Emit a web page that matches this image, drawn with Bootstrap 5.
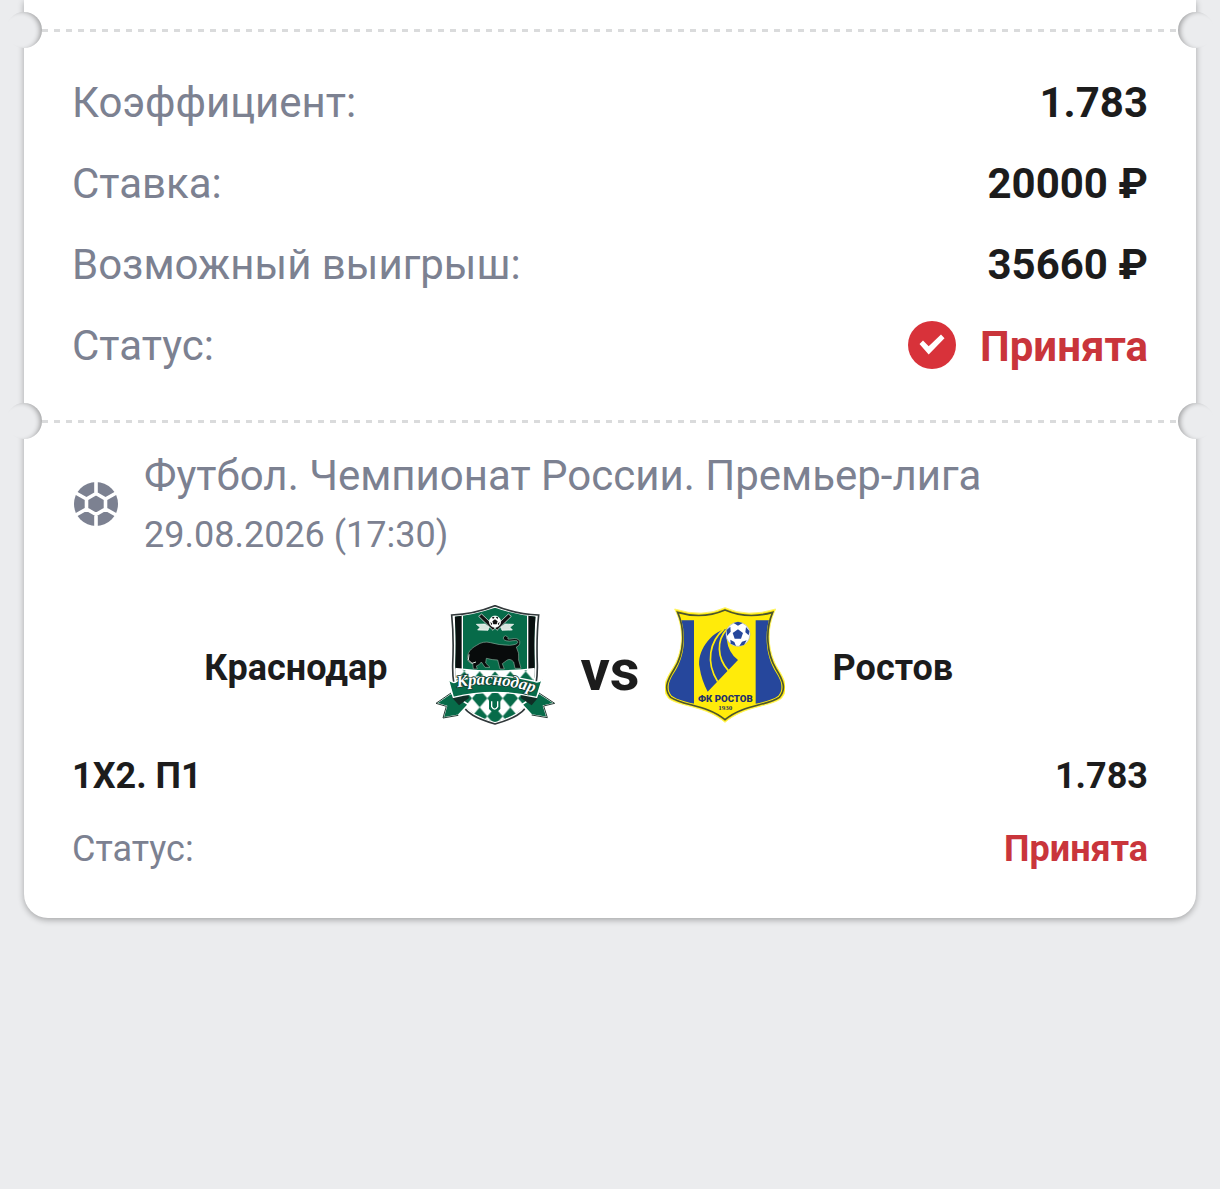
<!DOCTYPE html>
<html lang="ru">
<head>
<meta charset="utf-8">
<meta name="viewport" content="width=device-width, initial-scale=1">
<title>Купон</title>
<link rel="stylesheet" href="https://cdn.jsdelivr.net/npm/bootstrap@5.3.0/dist/css/bootstrap.min.css">
<style>
  body { background: #ebecee; color: #1c1c1c; font-family: Roboto, "Noto Sans", sans-serif; font-size: 42px; line-height: 49px; }
  .ticket { background: #fff; border-radius: 0 0 24px 24px; box-shadow: 0 2px 6px rgba(0,0,0,.3); padding-bottom: 48px; }
  .ticket-stub { height: 29px; }
  .perforation { height: 3px; margin: 0 18px; background: repeating-linear-gradient(90deg, #dadbdc 0 6px, transparent 6px 12px); }
  .tear { position: relative; }
  .notch { position: absolute; top: -17px; width: 36px; height: 36px; border-radius: 50%; background: #ebecee; }
  .notch-left { left: -18px; box-shadow: inset -4px 1px 5px -2px rgba(0,0,0,.32); }
  .notch-right { right: -18px; box-shadow: inset 4px 1px 5px -2px rgba(0,0,0,.32); }
  .totals { padding: 46px 48px 49px; gap: 32px; }
  .status-icon { margin-bottom: 2px; }
  .muted-label { color: #7c8191; font-weight: 400; }
  .accepted { color: #c9353b; }
  .event { padding: 28px 48px 0; }
  .event-date { padding-top: 14px; }
  .text-md { font-size: 36px; line-height: 42px; }
  .versus { font-size: 58px; line-height: 68px; padding-top: 10px; }
  .teams { padding-top: 49px; gap: 25px; }
  .team { gap: 48px; }
  .team-name { padding-top: 6px; }
  .outcome { padding-top: 30px; gap: 31px; }
</style>
</head>
<body class="min-vh-100">
<main class="px-4">
  <article class="ticket">
    <div class="ticket-stub"></div>
    <div class="tear"><div class="perforation"></div><span class="notch notch-left"></span><span class="notch notch-right"></span></div>

    <dl class="totals d-flex flex-column mb-0">
      <div class="d-flex justify-content-between"><dt class="muted-label">Коэффициент:</dt><dd class="fw-bold mb-0">1.783</dd></div>
      <div class="d-flex justify-content-between"><dt class="muted-label">Ставка:</dt><dd class="fw-bold mb-0">20000 ₽</dd></div>
      <div class="d-flex justify-content-between"><dt class="muted-label">Возможный выигрыш:</dt><dd class="fw-bold mb-0">35660 ₽</dd></div>
      <div class="d-flex justify-content-between"><dt class="muted-label">Статус:</dt>
        <dd class="fw-bold mb-0 accepted d-flex align-items-end gap-4">
          <svg class="status-icon" width="48" height="48" viewBox="0 0 48 48" aria-hidden="true"><circle cx="24" cy="24" r="24" fill="#d8323a"/><path d="M11.500 23 15 19.500 20.700 25.200 33 13.500 36.500 17.200 20.700 33.500Z" fill="#fff"/></svg>
          Принята</dd></div>
    </dl>

    <div class="tear"><div class="perforation"></div><span class="notch notch-left"></span><span class="notch notch-right"></span></div>

    <section class="event">
      <header class="event-head d-flex align-items-center gap-4">
        <svg width="48" height="48" viewBox="0 0 48 48" aria-hidden="true"><circle cx="24" cy="24" r="22" fill="#7c8191"/><path d="M24 13.500 33.500 19V29L24 34.500 14.500 29V19ZM24 0V13.500M33.500 19 46 12M33.500 29 46 36M24 34.500V48M14.500 29 2 36M14.500 19 2 12" fill="none" stroke="#fff" stroke-width="3.600"/></svg>
        <div>
          <div class="muted-label">Футбол. Чемпионат России. Премьер-лига</div>
          <div class="muted-label text-md event-date">29.08.2026 (17:30)</div>
        </div>
      </header>

      <div class="teams d-flex align-items-center justify-content-center">
        <div class="team d-flex align-items-center justify-content-end flex-fill w-25">
          <span class="team-name text-md fw-bold">Краснодар</span>
          <svg class="flex-shrink-0" width="120" height="120" viewBox="30 30 360 360" role="img" aria-label="Краснодар">
            <defs>
              <clipPath id="kr"><path d="M89 65Q145 60 210 38Q272 60 332 65Q326 120 329 205Q330 270 315 300C300 350 255 367 210 381C165 367 120 350 105 300Q90 270 91 205Q94 120 89 65Z"/></clipPath>
              <pattern id="dia" width="46" height="54" patternUnits="userSpaceOnUse" x="187" y="283"><path fill="#fff" d="M0 0h46v54H0z"/><path fill="#076b49" d="M23 0 46 27 23 54 0 27Z"/></pattern>
              <path id="ribbonText" d="M102 276Q212 256 322 292"/>
            </defs>
            <path d="M80 60Q145 58 210 32Q275 58 341 60Q334 125 337 210Q338 270 321 304C305 358 255 374 210 387C165 374 115 358 98 304Q82 270 83 210Q87 125 80 60Z" fill="#fff" stroke="#30383a" stroke-width="5"/>
            <g clip-path="url(#kr)">
              <path fill="#076b49" d="M80 30h260v360H80z"/>
              <path fill="#090f0f" d="M83 60h29v190H83zM309 60h29v190h-29z"/>
              <path fill="#fff" d="M110 60h4v190h-4zM306 60h4v190h-4z"/>
              <path fill="#fff" d="M88 218Q210 234 333 218V390H88Z"/>
              <path fill="url(#dia)" d="M88 222Q210 238 333 222V390H88Z"/>
            </g>
            <g stroke="#fff" stroke-width="2" fill="#111">
              <path d="m154 88 25-1 14 9-4 10-31-1 7-8ZM266 88l-25-1-14 9 4 10 31-1-7-8Z" fill="#d7e5dd"/>
              <path d="m161 64 9-7 42 40-8 9ZM259 64l-9-7-42 40 8 9Z"/>
              <circle cx="210" cy="80" r="17" fill="#fff"/>
              <path d="m210 73 8 6-3 9h-10l-3-9ZM201 66h8l-5 7ZM219 66h-7l6 7ZM196 80l6 6-3 5ZM224 80l-6 6 3 5Z" stroke="none"/>
            </g>
            <path d="M127 190C128 170 139 160 155 151Q174 137 197 143Q219 150 254 151Q276 149 278 143Q281 135 264 137Q242 141 235 132Q233 124 242 122L250 128Q244 134 258 132Q279 127 284 139Q286 152 274 156Q284 174 281 195L288 220H270L266 201Q255 188 244 197L232 206 238 222H225L218 195Q202 195 184 190L182 204 195 217H180L169 201Q164 210 154 213L157 222H145L143 206Q127 202 127 190Z" fill="#080b0b" stroke="#8ba99a" stroke-width="2"/>
            <path d="m132 178-2 17 11 10 12-4" fill="none" stroke="#d9e5dd" stroke-width="3"/>
            <path d="M78 294 33 325 64 334 54 369 100 361 130 329ZM342 294 389 325 356 333 367 368 320 360 291 329Z" fill="#076b49" stroke="#fff" stroke-width="5"/>
            <path d="M78 294 33 325 64 334 54 369 100 361M342 294 389 325 356 333 367 368 320 360" fill="none" stroke="#263c35" stroke-width="3"/>
            <path d="m80 307 48-14 4 16-30 22ZM340 307l-49-14-4 16 33 22Z" fill="#102d25"/>
            <path d="M70 253Q86 269 96 258Q207 228 325 258Q340 266 352 252L335 307Q210 277 85 307Z" fill="#076b49" stroke="#fff" stroke-width="4"/>
            <text font-family="Liberation Serif, serif" font-size="50" font-weight="700" font-style="italic" fill="#fff" stroke="#153c30" stroke-width="5" paint-order="stroke"><textPath href="#ribbonText" startOffset="50%" text-anchor="middle">Краснодар</textPath></text>
            <path d="M192 313h34v29q-17 21-34 0Z" fill="#076b49"/><path d="M200 319v16q9 15 18 0v-16" fill="none" stroke="#fff" stroke-width="4"/>
          </svg>
        </div>
        <strong class="versus">vs</strong>
        <div class="team d-flex align-items-center flex-fill w-25">
          <svg class="flex-shrink-0" width="120" height="120" viewBox="30 30 360 360" role="img" aria-label="Ростов">
            <defs><clipPath id="ro"><path d="M74 60Q143 78 210 50Q277 78 347 60C327 110 332 178 358 224C378 255 389 278 370 302C333 329 263 323 210 367C158 323 88 329 50 302C31 278 43 255 63 224C91 178 94 110 74 60Z"/></clipPath></defs>
            <path d="M59 42Q142 69 210 38Q278 69 362 42C331 104 340 174 368 220C392 258 402 286 377 312C339 336 267 333 210 382C153 333 81 336 43 312C18 286 29 258 53 220C83 174 91 104 59 42Z" fill="#ffeb0a" stroke="#fff568" stroke-width="3"/>
            <path d="M68 52Q143 74 210 45Q277 74 353 52C329 107 336 177 363 222C386 258 394 283 373 307C336 333 265 328 210 374C155 328 84 333 47 307C26 283 35 258 58 222C87 177 92 107 68 52Z" fill="#ffeb0a" stroke="#4b5430" stroke-width="5"/>
            <g clip-path="url(#ro)"><path fill="#26479c" d="M30 76h87v250H30zM302 76h90v250h-90z"/></g>
            <path d="M215 101C166 111 124 171 134 218Q139 253 158 290L249 195Q220 174 215 132Z" fill="#26479c"/>
            <path d="M207 102C164 139 151 202 188 260M215 103C185 135 185 188 220 227" fill="none" stroke="#ffeb0a" stroke-width="5"/>
            <circle cx="249" cy="118" r="36" fill="#fff" stroke="#a7b1ca" stroke-width="2"/>
            <g fill="#26479c"><path d="m249 103 15 11-6 17h-19l-6-17ZM236 84l13-4 14 4-14 8ZM273 96l10 12-2 13-10-9ZM275 136l-8 14-14 3 8-13ZM226 134l12 7 5 12-16-7ZM215 105l11-10 1 15-11 13Z"/></g>
            <text x="211" y="321" text-anchor="middle" font-family="Roboto, sans-serif" font-size="29" font-weight="900" fill="#22306b">ФК РОСТОВ</text>
            <text x="211" y="346" text-anchor="middle" font-family="Liberation Serif, serif" font-size="21" font-weight="700" fill="#34395a">1930</text>
          </svg>
          <span class="team-name text-md fw-bold">Ростов</span>
        </div>
      </div>

      <div class="outcome d-flex flex-column text-md">
        <div class="d-flex justify-content-between fw-bold"><span>1X2. П1</span><span>1.783</span></div>
        <div class="d-flex justify-content-between"><span class="muted-label">Статус:</span><strong class="accepted">Принята</strong></div>
      </div>
    </section>
  </article>
</main>
<script src="https://cdn.jsdelivr.net/npm/bootstrap@5.3.0/dist/js/bootstrap.bundle.min.js"></script>
</body>
</html>
